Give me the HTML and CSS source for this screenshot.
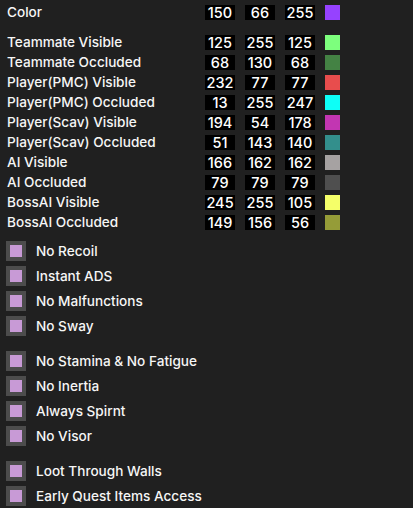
FILE: index.html
```html
<!DOCTYPE html>
<html lang="en">
<head>
    <meta charset="UTF-8">
    <meta name="viewport" content="width=device-width, initial-scale=1.0">
    <title>Visuals</title>
    <link rel="stylesheet" href="styles.css">
</head>
<body>
    <div class="panel">
        <div class="color-row head">
            <span class="label">Color</span>
            <span class="num">150</span><span class="num">66</span><span class="num">255</span>
            <span class="swatch" style="background: rgb(150, 66, 255)"></span>
        </div>

        <div class="color-table">
            <div class="color-row">
                <span class="label">Teammate Visible</span>
                <span class="num">125</span><span class="num">255</span><span class="num">125</span>
                <span class="swatch" style="background: rgb(125, 255, 125)"></span>
            </div>
            <div class="color-row">
                <span class="label">Teammate Occluded</span>
                <span class="num">68</span><span class="num">130</span><span class="num">68</span>
                <span class="swatch" style="background: rgb(68, 130, 68)"></span>
            </div>
            <div class="color-row">
                <span class="label">Player(PMC) Visible</span>
                <span class="num">232</span><span class="num">77</span><span class="num">77</span>
                <span class="swatch" style="background: rgb(232, 77, 77)"></span>
            </div>
            <div class="color-row">
                <span class="label">Player(PMC) Occluded</span>
                <span class="num">13</span><span class="num">255</span><span class="num">247</span>
                <span class="swatch" style="background: rgb(13, 255, 247)"></span>
            </div>
            <div class="color-row">
                <span class="label">Player(Scav) Visible</span>
                <span class="num">194</span><span class="num">54</span><span class="num">178</span>
                <span class="swatch" style="background: rgb(194, 54, 178)"></span>
            </div>
            <div class="color-row">
                <span class="label">Player(Scav) Occluded</span>
                <span class="num">51</span><span class="num">143</span><span class="num">140</span>
                <span class="swatch" style="background: rgb(51, 143, 140)"></span>
            </div>
            <div class="color-row">
                <span class="label">AI Visible</span>
                <span class="num">166</span><span class="num">162</span><span class="num">162</span>
                <span class="swatch" style="background: rgb(166, 162, 162)"></span>
            </div>
            <div class="color-row">
                <span class="label">AI Occluded</span>
                <span class="num">79</span><span class="num">79</span><span class="num">79</span>
                <span class="swatch" style="background: rgb(79, 79, 79)"></span>
            </div>
            <div class="color-row">
                <span class="label">BossAI Visible</span>
                <span class="num">245</span><span class="num">255</span><span class="num">105</span>
                <span class="swatch" style="background: rgb(245, 255, 105)"></span>
            </div>
            <div class="color-row">
                <span class="label">BossAI Occluded</span>
                <span class="num">149</span><span class="num">156</span><span class="num">56</span>
                <span class="swatch" style="background: rgb(149, 156, 56)"></span>
            </div>
        </div>

        <div class="group first">
            <label class="check"><span class="box"></span>No Recoil</label>
            <label class="check"><span class="box"></span>Instant ADS</label>
            <label class="check"><span class="box"></span>No Malfunctions</label>
            <label class="check"><span class="box"></span>No Sway</label>
        </div>
        <div class="group">
            <label class="check"><span class="box"></span>No Stamina &amp; No Fatigue</label>
            <label class="check"><span class="box"></span>No Inertia</label>
            <label class="check"><span class="box"></span>Always Spirnt</label>
            <label class="check"><span class="box"></span>No Visor</label>
        </div>
        <div class="group">
            <label class="check"><span class="box"></span>Loot Through Walls</label>
            <label class="check"><span class="box"></span>Early Quest Items Access</label>
        </div>
    </div>
</body>
</html>
```

FILE: styles.css
```css
body {
    margin: 0;
    background-color: #202020;
    color: #f6f6f6;
    font-family: Inter, "Noto Sans", sans-serif;
    font-size: 13.6px;
    font-weight: 500;
}
.panel {
    padding: 2px 0 0 7px;
    width: 406px;
    height: 506px;
    overflow: hidden;
}
.color-table {
    margin-top: 10px;
}
.color-row {
    display: flex;
    align-items: center;
    height: 20px;
}
.label {
    width: 198px;
    white-space: nowrap;
}
.num {
    width: 30px;
    height: 15px;
    margin-right: 10px;
    background-color: #000;
    color: #fff;
    font-size: 14.5px;
    line-height: 15px;
    text-align: center;
}
.swatch {
    width: 15px;
    height: 15px;
}
.group {
    margin-top: 10px;
}
.group.first {
    margin-top: 6px;
}
.check {
    display: flex;
    align-items: center;
    height: 25px;
    margin-left: -1px;
}
.box {
    box-sizing: border-box;
    width: 20px;
    height: 20px;
    margin-right: 10px;
    border: 4px solid #4c4c4c;
    background-color: #c89ad6;
}
```
